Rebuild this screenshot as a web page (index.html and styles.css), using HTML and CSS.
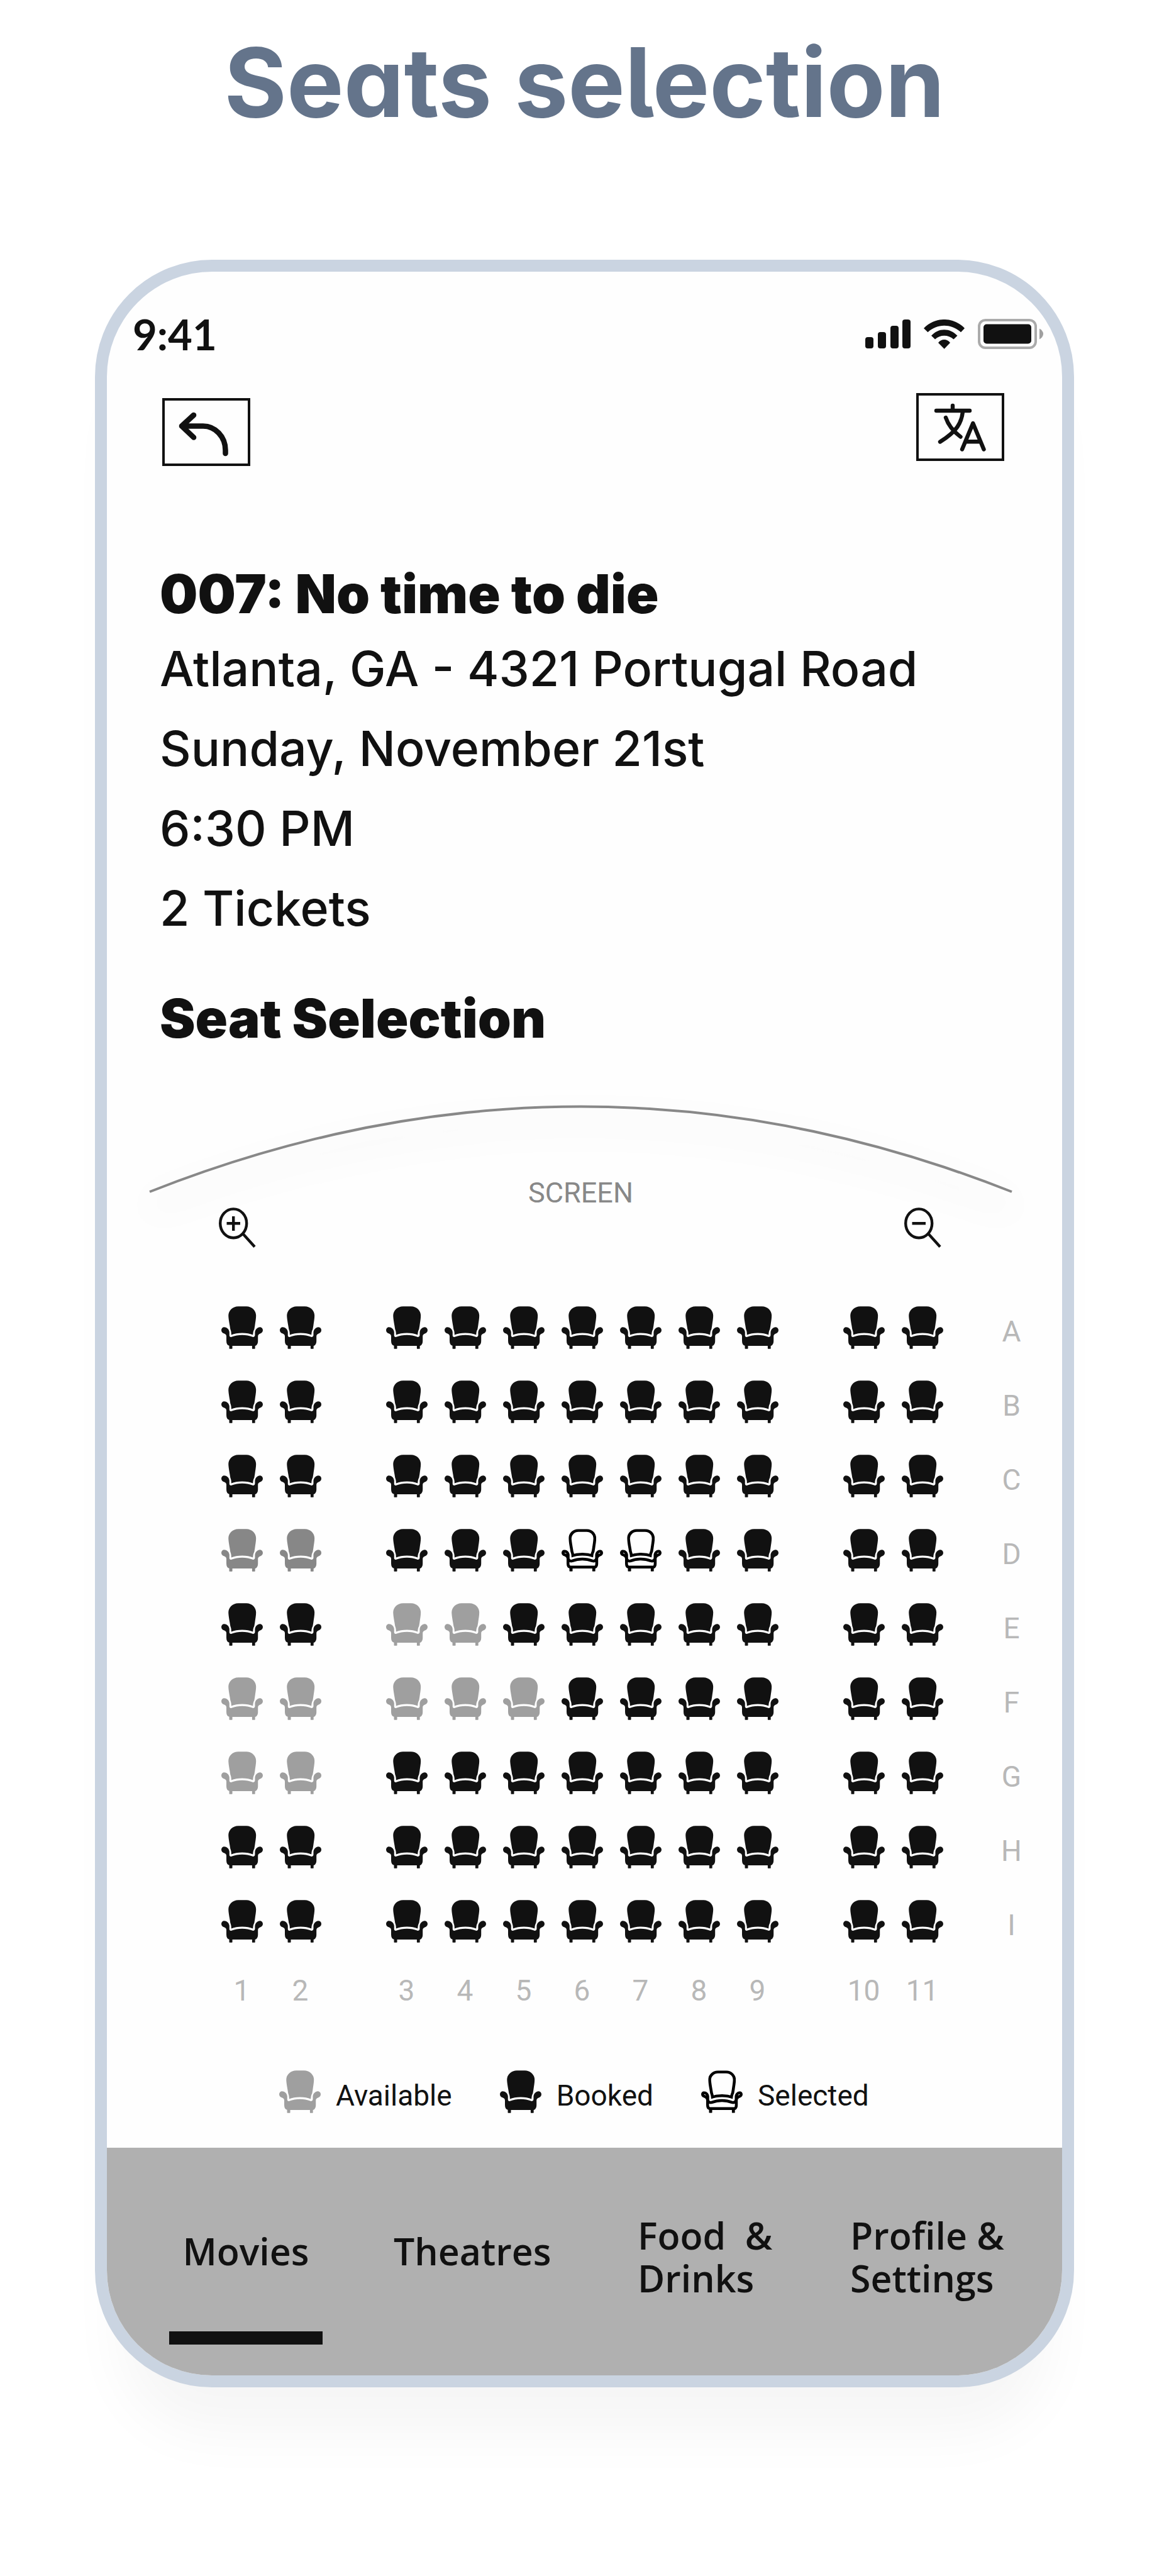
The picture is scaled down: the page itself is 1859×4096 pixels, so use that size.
FILE: index.html
```html
<!DOCTYPE html>
<html lang="en">
<head>
<meta charset="utf-8">
<meta name="viewport" content="width=device-width, initial-scale=1">
<title>Seats selection</title>
<link rel="stylesheet" href="styles.css">
</head>
<body>
<svg class="sprite" width="0" height="0" aria-hidden="true">
  <defs>
    <path id="seat-back" d="M124 1H184C224 1 255 32 255 68C255 90 250 115 246 145L242 168C234 182 233 195 232 210C210 202 185 196 153 196C122 196 95 202 73 210C74 195 71 180 66 168C62 140 52 95 52 68C52 32 84 1 124 1Z"/>
    <path id="seat-base" d="M20 153C45 153 59 175 59 190V215C59 223 66 228 75 225C100 215 125 211 153 211C182 211 205 215 230 225C240 228 247 222 247 213V190C249 170 265 153 283 153C296 153 305 163 305 176C305 190 296 198 285 201C275 205 269 212 269 220V255C269 275 260 288 248 291V309Q248 313 243 313H230Q226 313 226 309V291H81V309Q80 313 76 313H63Q58 313 58 309V290C45 287 37 275 37 255V220C37 210 30 205 22 201C8 198 0 190 0 176C0 163 9 153 20 153Z"/>
    <clipPath id="clip-back"><use href="#seat-back"/></clipPath>
    <clipPath id="clip-base"><use href="#seat-base"/></clipPath>
    <symbol id="seat" viewBox="0 0 305 314">
      <use href="#seat-back"/>
      <use href="#seat-base"/>
    </symbol>
    <symbol id="seat-outline" viewBox="0 0 305 314">
      <use href="#seat-back" fill="none" stroke="#000" stroke-width="42" clip-path="url(#clip-back)"/>
      <use href="#seat-base" fill="none" stroke="#000" stroke-width="42" clip-path="url(#clip-base)"/>
    </symbol>
  </defs>
</svg>

<h1 class="page-title">Seats selection</h1>

<main class="phone">
  <header class="status">
    <span class="status-time">9:41</span>
    <div class="status-icons">
      <svg width="72" height="46" viewBox="0 0 72 46" fill="#111" aria-hidden="true">
        <rect x="0" y="28" width="13" height="18" rx="4"/>
        <rect x="20" y="20" width="13" height="26" rx="4"/>
        <rect x="40" y="10" width="13" height="36" rx="4"/>
        <rect x="59" y="0" width="13" height="46" rx="4"/>
      </svg>
      <svg width="65" height="47" viewBox="0 0 65 47" fill="#111" aria-hidden="true">
        <path d="M0 14C18-4.700 47-4.700 65 14L59 20.300C44 6.200 21 6.200 6.500 20.300Z"/>
        <path d="M12 25.800C23 12.900 42 12.900 53.500 25.800L47.500 31.500C39 23.900 26 23.900 18 31.500Z"/>
        <path d="M23 37C28 30.400 37 30.400 42 37L32.600 46.700Z"/>
      </svg>
      <svg width="104" height="48" viewBox="0 0 104 48" fill="#111" aria-hidden="true">
        <rect x="2" y="2" width="90" height="44" rx="10" fill="none" stroke="#ababab" stroke-width="4"/>
        <rect x="9" y="8.500" width="76" height="31" rx="5"/>
        <path d="M98 15.500Q104 19 104 24T98 32.500Z" fill="#a0a0a0"/>
      </svg>
    </div>
  </header>

  <div class="toolbar">
    <button class="tool tool-back" type="button" aria-label="Back">
      <svg viewBox="4 4 132 100" fill="none" stroke="#111" stroke-width="8.600" stroke-linecap="round" stroke-linejoin="round" aria-hidden="true">
        <path d="M50 27L31 44.500L50 62.500M31 44.500H65C84 44.500 100.500 61 100.500 83V88"/>
      </svg>
    </button>
    <button class="tool" type="button" aria-label="Change language">
      <svg viewBox="4 4 132 100" fill="none" stroke="#111" stroke-width="6.400" stroke-linecap="round" stroke-linejoin="round" aria-hidden="true">
        <path d="M58 20V28M32 28H85M74 30C72 47 65 61 38 77.500M47 39C51 51 59 61 70.500 69.500M73 89.500L90.300 48L107.500 89.500M79 77.300H102"/>
      </svg>
    </button>
  </div>

  <section class="booking">
    <h2 class="heading">007: No time to die</h2>
    <p class="detail">Atlanta, GA - 4321 Portugal Road</p>
    <p class="detail">Sunday, November 21st</p>
    <p class="detail">6:30 PM</p>
    <p class="detail">2 Tickets</p>
    <h2 class="heading heading-seats">Seat Selection</h2>
  </section>

  <div class="screen">
    <svg class="screen-arc" viewBox="0 0 1374 142" preserveAspectRatio="none" aria-hidden="true">
      <path d="M1 139Q687-132 1373 139" fill="none" stroke="#888" stroke-width="4"/>
    </svg>
    <span class="screen-label">SCREEN</span>
  </div>

  <div class="zoom">
    <button class="zoom-button" type="button" aria-label="Zoom in">
      <svg width="59" height="64" viewBox="0 0 59 64" fill="none" stroke="#111" stroke-width="4.400" aria-hidden="true">
        <ellipse cx="23.200" cy="25.300" rx="21" ry="22.900"/>
        <path d="M12.500 25.300H34M23.200 14V37M38.500 42L57 62.500"/>
      </svg>
    </button>
    <button class="zoom-button" type="button" aria-label="Zoom out">
      <svg width="59" height="64" viewBox="0 0 59 64" fill="none" stroke="#111" stroke-width="4.400" aria-hidden="true">
        <ellipse cx="23.200" cy="25.300" rx="21" ry="22.900"/>
        <path d="M12.500 25.300H34M38.500 42L57 62.500"/>
      </svg>
    </button>
  </div>

  <div class="seats" id="seats"></div>

  <ul class="legend">
    <li class="legend-item"><svg class="seat-icon available"><use href="#seat"/></svg><span class="legend-label">Available</span></li>
    <li class="legend-item"><svg class="seat-icon"><use href="#seat"/></svg><span class="legend-label">Booked</span></li>
    <li class="legend-item"><svg class="seat-icon"><use href="#seat-outline"/></svg><span class="legend-label">Selected</span></li>
  </ul>

  <nav class="tabs">
    <a class="tab tab-active" href="#movies" aria-current="page">Movies</a>
    <a class="tab" href="#theatres">Theatres</a>
    <a class="tab tab-tall" href="#food">Food&nbsp; &amp;<br>Drinks</a>
    <a class="tab tab-tall" href="#profile">Profile &amp;<br>Settings</a>
  </nav>
</main>
<script src="seats.js"></script>
</body>
</html>
```

FILE: styles.css
```css
* {
  box-sizing: border-box;
}

body {
  margin: 0;
  padding: 40px 151px 300px;
  background: #fff;
  color: #111;
  font-family: Inter, sans-serif;
}

h1, h2, p, ul {
  margin: 0;
  padding: 0;
}

button {
  padding: 0;
  border: 0;
  background: none;
  color: inherit;
}

svg {
  display: block;
}

.sprite {
  position: absolute;
}

.page-title {
  margin-bottom: 191px;
  color: #64748b;
  font-size: 152px;
  font-weight: 700;
  line-height: 182px;
  text-align: center;
  font-feature-settings: "cv05", "cv11";
}

.phone {
  overflow: hidden;
  border: 19px solid #cad4e1;
  border-radius: 186px;
  background: #fefefe;
  box-shadow: 0 112px 90px -40px rgba(0, 0, 0, 0.04);
}

.status {
  display: flex;
  justify-content: space-between;
  height: 123px;
  padding: 75px 30px 0 41px;
}

.status-time {
  font-family: Lato, sans-serif;
  font-size: 67px;
  font-weight: 700;
  line-height: 48px;
}

.status-icons {
  display: flex;
  align-items: center;
  gap: 21px;
}

.toolbar {
  display: flex;
  justify-content: space-between;
  height: 116px;
  margin-top: 70px;
  padding: 0 92px 0 88px;
}

.tool {
  width: 140px;
  height: 108px;
  border: 4px solid #111;
}

.tool-back {
  align-self: flex-end;
}

.booking {
  padding: 149px 84px 0;
}

.heading {
  font-size: 85px;
  font-weight: 900;
  line-height: 110px;
}

.heading-seats {
  margin-top: 57px;
}

.detail {
  font-size: 77px;
  font-weight: 500;
  line-height: 127px;
}

.screen {
  display: grid;
  height: 164px;
  margin: 81px 79px 0 67px;
}

.screen-arc {
  grid-area: 1 / 1;
  width: 100%;
  height: 142px;
  overflow: visible;
  filter: drop-shadow(0 26px 26px rgba(0, 0, 0, 0.15));
}

.screen-label {
  grid-area: 1 / 1;
  place-self: end center;
  color: #888;
  font-family: Roboto, sans-serif;
  font-size: 45px;
  line-height: 46px;
}

.zoom {
  display: flex;
  justify-content: space-between;
  padding: 0 192px 0 178px;
}

.seats {
  display: grid;
  grid-template-columns: repeat(2, 93fr) 76fr repeat(7, 93fr) 76fr repeat(2, 93fr) 49fr 93fr;
  grid-template-rows: repeat(10, 68px);
  row-gap: 50px;
  justify-items: center;
  margin-top: 93px;
  padding: 0 34px 0 168px;
}

.seat-icon {
  width: 66px;
  height: 68px;
  fill: #111;
}

.available {
  fill: #9f9f9f;
}

.available-dark {
  fill: #878787;
}

.row-label,
.column-label {
  color: #b8b8b8;
  font-family: Roboto, sans-serif;
  font-size: 46px;
}

.row-label {
  align-self: end;
  line-height: 56px;
}

.column-label {
  line-height: 52px;
}

.legend {
  display: flex;
  gap: 76px;
  margin-top: 85px;
  padding-left: 274px;
  list-style: none;
}

.legend-item {
  display: flex;
  align-items: flex-end;
  gap: 24px;
}

.legend-label {
  font-family: Roboto, sans-serif;
  font-size: 46px;
  line-height: 56px;
}

.tabs {
  display: grid;
  grid-template-columns: 357fr 388fr 338fr 337fr;
  align-items: start;
  height: 362px;
  margin-top: 55px;
  padding-left: 99px;
  background: #b0b0b0;
}

.tab {
  margin-top: 130px;
  color: #111;
  font-family: "Open Sans", sans-serif;
  font-size: 59px;
  font-weight: 600;
  line-height: 68px;
  text-decoration: none;
}

.tab-tall {
  margin-top: 105px;
}

.tab-active {
  width: 244px;
  height: 183px;
  border-bottom: 21px solid #111;
  text-align: center;
}
```

FILE: seats.js
```js
const rows = {
  A: 'bb bbbbbbb bb',
  B: 'bb bbbbbbb bb',
  C: 'bb bbbbbbb bb',
  D: 'dd bbbssbb bb',
  E: 'bb aabbbbb bb',
  F: 'aa aaabbbb bb',
  G: 'aa bbbbbbb bb',
  H: 'bb bbbbbbb bb',
  I: 'bb bbbbbbb bb'
};

const kinds = {
  b: { name: 'booked', icon: 'seat', className: '' },
  a: { name: 'available', icon: 'seat', className: 'available' },
  d: { name: 'available', icon: 'seat', className: 'available-dark' },
  s: { name: 'selected', icon: 'seat-outline', className: '' }
};

let html = '';
for (const [row, seats] of Object.entries(rows)) {
  let number = 0;
  for (const code of seats) {
    if (code === ' ') {
      html += '<span></span>';
      continue;
    }
    number += 1;
    const kind = kinds[code];
    html += `<button type="button" aria-label="Seat ${row}${number}, ${kind.name}">` +
      `<svg class="seat-icon ${kind.className}"><use href="#${kind.icon}"/></svg></button>`;
  }
  html += `<span></span><span class="row-label">${row}</span>`;
}

for (const label of ['1', '2', '', '3', '4', '5', '6', '7', '8', '9', '', '10', '11']) {
  html += `<span class="column-label">${label}</span>`;
}

document.getElementById('seats').innerHTML = html;
```
